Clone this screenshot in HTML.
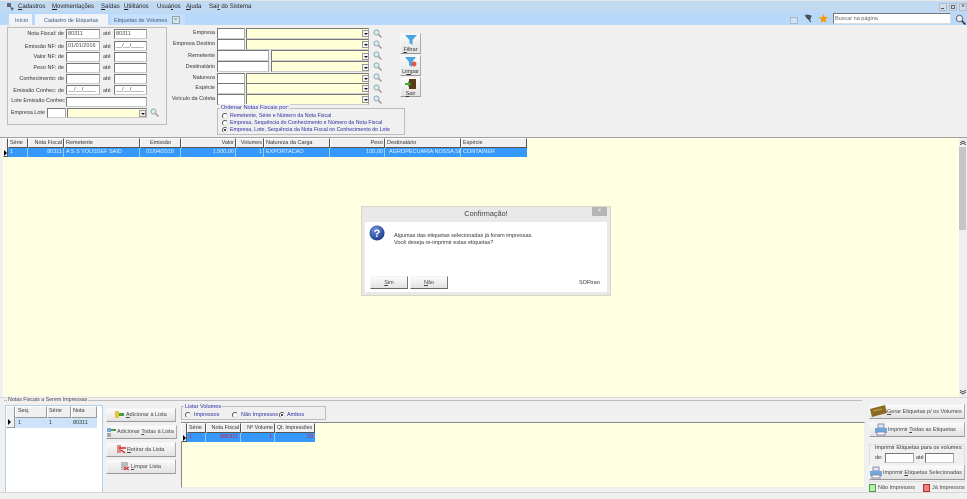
<!DOCTYPE html>
<html lang="pt-BR"><head><meta charset="utf-8"><title>Etiquetas de Volumes</title>
<style>
html,body{margin:0;padding:0;width:967px;height:499px;overflow:hidden;background:#f0f0f0}
body{font:5.5px/1 "Liberation Sans",sans-serif;color:#333;position:relative}
#r{position:absolute;left:0;top:0;width:967px;height:499px;filter:blur(.35px)}
#r div,#r svg{position:absolute}
.t{white-space:nowrap;line-height:8px;height:8px}
.m{font-size:6px;color:#222;top:3px}
.l{white-space:nowrap;line-height:8px;height:8px;text-align:right}
.i{background:#fff;border:1px solid;border-color:#777 #aaa #ccc #777;box-sizing:border-box;height:11px;line-height:8px;padding-left:1px;color:#444}
.y{background:#ffffd8;border:1px solid;border-color:#777 #aaa #ccc #777;box-sizing:border-box;height:11px}
.ar{background:#f4f4f4;width:7px;height:7px;border:1px solid #999;box-sizing:border-box}
.ar:after{content:"";position:absolute;left:1px;top:2px;border:2px solid transparent;border-top:2px solid #111;border-bottom:0}
.h{background:#f0f0f0;border:1px solid;border-color:#fff #555 #555 #fff;box-sizing:border-box;height:10px;line-height:8px;white-space:nowrap;padding:0 1px;overflow:hidden;color:#333}
.c{height:9px;line-height:9px;color:#e8f3ff;white-space:nowrap;padding:0 1px;box-sizing:border-box;border-right:1px solid #9ccbf8;overflow:hidden}
.b{background:linear-gradient(#fbfbfb,#e2e2e2);border:1px solid;border-color:#f4f4f4 #aaa #999 #f4f4f4;box-sizing:border-box;line-height:12px;text-align:center;white-space:nowrap;color:#444}
.tl{text-align:left}
.gb{border:1px solid #bdbdbd;box-sizing:border-box}
.rb{width:6px;height:6px;border-radius:50%;background:#fff;border:1px solid;border-color:#555 #ddd #ddd #555;box-sizing:border-box}
.on:after{content:"";position:absolute;left:1px;top:1px;width:2px;height:2px;background:#111;border-radius:50%}
.bl{color:#2c2ca0}
.red{color:#d8193f}
u{text-decoration:underline}
</style></head><body><div id="r">

<!-- top bars -->
<div style="left:0;top:0;width:967px;height:1px;background:#e6e6e6"></div>
<div style="left:0;top:1px;width:967px;height:11px;background:#c2d9f2"></div>
<div style="left:0;top:12px;width:967px;height:13px;background:#b9d9fb"></div>
<svg style="left:7px;top:3px" width="8" height="8" viewBox="0 0 8 8"><path d="M0 0h4v4H0zM3 4l4 1-2 3z" fill="#667"/></svg>
<div class="t m" style="left:18px"><u>C</u>adastros</div>
<div class="t m" style="left:52px"><u>M</u>ovimentações</div>
<div class="t m" style="left:101px"><u>S</u>aídas</div>
<div class="t m" style="left:124px"><u>U</u>tilitários</div>
<div class="t m" style="left:157px">Usuá<u>r</u>ios</div>
<div class="t m" style="left:186px"><u>A</u>juda</div>
<div class="t m" style="left:209px">Sai<u>r</u> do Sistema</div>

<div style="left:939px;top:3px;width:8px;height:8px;background:#d2dde8;border:1px solid #b0bccb;box-sizing:border-box"></div>
<div style="left:941px;top:8px;width:3px;height:1px;background:#555"></div>
<div style="left:949px;top:3px;width:8px;height:8px;background:#d2dde8;border:1px solid #b0bccb;box-sizing:border-box"></div>
<div style="left:951px;top:5px;width:4px;height:4px;border:1px solid #666;box-sizing:border-box"></div>
<div style="left:959px;top:3px;width:8px;height:8px;background:#d2dde8;border:1px solid #b0bccb;box-sizing:border-box"></div>
<div class="t" style="left:961px;top:3px;color:#444;font-size:7px">×</div>

<!-- tabs -->
<div style="left:9px;top:14px;width:23px;height:11px;background:#f0f4f8"></div>
<div class="t" style="left:15px;top:17px;color:#3c5a80">Início</div>
<div style="left:35px;top:14px;width:73px;height:11px;background:#f0f4f8"></div>
<div class="t" style="left:44px;top:17px;color:#3c5a80">Cadastro de Etiquetas</div>
<div style="left:111px;top:14px;width:74px;height:11px;background:#c6e0fb"></div>
<div class="t" style="left:114px;top:17px;color:#3c5a80">Etiquetas de Volumes</div>
<div style="left:172px;top:16px;width:8px;height:8px;background:#d8e4f0;border:1px solid #8aa;box-sizing:border-box"></div>
<div class="t" style="left:174px;top:16px;color:#666">×</div>

<div style="left:790px;top:17px;width:8px;height:7px;background:#d2e2f4;border:1px solid #a8b8ca;box-sizing:border-box"></div>
<svg style="left:804px;top:14px" width="9" height="9" viewBox="0 0 9 9"><path d="M1 1l6 7M3 1l4 1-1 3-3-1z" stroke="#444" fill="#555"/></svg>
<svg style="left:819px;top:14px" width="9" height="9" viewBox="0 0 10 10"><path d="M5 0l1.500 3.300 3.500.4-2.600 2.400.7 3.600L5 8l-3.100 1.700.7-3.600L0 3.700l3.500-.4z" fill="#f59a10"/></svg>
<div style="left:833px;top:13px;width:118px;height:11px;background:#fff;border:1px solid;border-color:#777 #ddd #ddd #777;box-sizing:border-box"></div>
<div class="t" style="left:835px;top:15px;color:#666">Buscar na página</div>
<svg style="left:955px;top:14px" width="11" height="11" viewBox="0 0 11 11"><circle cx="4.500" cy="4.500" r="3.200" fill="#e6eef6" stroke="#777" stroke-width="1.200"/><path d="M7 7l3.500 3.500" stroke="#333" stroke-width="1.600"/></svg>

<!-- left filter -->
<div class="gb" style="left:7px;top:27px;width:160px;height:98px;background:#f0f0f0"></div>
<div class="l" style="left:10px;width:54px;top:30px">Nota Fiscal: de</div>
<div class="l" style="left:10px;width:54px;top:43px">Emissão NF: de</div>
<div class="l" style="left:10px;width:54px;top:53px">Valor NF: de</div>
<div class="l" style="left:10px;width:54px;top:64px">Peso NF: de</div>
<div class="l" style="left:10px;width:54px;top:75px">Conhecimento: de</div>
<div class="l" style="left:10px;width:54px;top:87px">Emissão Conhec: de</div>
<div class="l" style="left:10px;width:55px;top:97px">Lote Emissão Conhec</div>
<div class="l" style="left:5px;width:40px;top:109px">Empresa Lote</div>

<div class="i" style="left:66px;top:29px;width:34px;height:10px">80311</div>
<div class="i" style="left:66px;top:41px;width:34px;height:10px">01/01/2016</div>
<div class="i" style="left:66px;top:52px;width:34px;height:10px"></div>
<div class="i" style="left:66px;top:63px;width:34px;height:10px"></div>
<div class="i" style="left:66px;top:74px;width:34px;height:10px"></div>
<div class="i" style="left:66px;top:85px;width:34px;height:10px">__/__/____</div>
<div class="i" style="left:66px;top:97px;width:81px;height:10px"></div>
<div class="i" style="left:47px;top:108px;width:19px;height:10px"></div>
<div class="y" style="left:67px;top:108px;width:80px;height:10px"></div>
<div class="ar" style="left:139px;top:110px"></div>

<div class="t" style="left:103px;top:30px">até</div>
<div class="t" style="left:103px;top:43px">até</div>
<div class="t" style="left:103px;top:53px">até</div>
<div class="t" style="left:103px;top:64px">até</div>
<div class="t" style="left:103px;top:75px">até</div>
<div class="t" style="left:103px;top:87px">até</div>
<div class="i" style="left:114px;top:29px;width:33px;height:10px">80311</div>
<div class="i" style="left:114px;top:41px;width:33px;height:10px">__/__/____</div>
<div class="i" style="left:114px;top:52px;width:33px;height:10px"></div>
<div class="i" style="left:114px;top:63px;width:33px;height:10px"></div>
<div class="i" style="left:114px;top:74px;width:33px;height:10px"></div>
<div class="i" style="left:114px;top:85px;width:33px;height:10px">__/__/____</div>
<svg style="left:150px;top:108px" width="9" height="9" viewBox="0 0 9 9"><circle cx="3.500" cy="3.500" r="2.500" fill="#dfeaf2" stroke="#8aa"/><path d="M5.500 5.500l3 3" stroke="#a88" stroke-width="1.300"/></svg>

<!-- right filter -->
<div class="l" style="left:170px;width:45px;top:29px">Empresa</div>
<div class="l" style="left:170px;width:45px;top:40px">Empresa Destino</div>
<div class="l" style="left:170px;width:45px;top:52px">Remetente</div>
<div class="l" style="left:170px;width:45px;top:63px">Destinatário</div>
<div class="l" style="left:170px;width:45px;top:74px">Natureza</div>
<div class="l" style="left:170px;width:45px;top:84px">Espécie</div>
<div class="l" style="left:170px;width:45px;top:95px">Veículo da Coleta</div>

<div class="i" style="left:217px;top:28px;width:28px"></div>
<div class="y" style="left:246px;top:28px;width:123px"></div>
<div class="ar" style="left:362px;top:30px"></div>
<div class="i" style="left:217px;top:39px;width:28px"></div>
<div class="y" style="left:246px;top:39px;width:123px"></div>
<div class="ar" style="left:362px;top:41px"></div>
<div class="i" style="left:217px;top:50px;width:52px"></div>
<div class="y" style="left:271px;top:50px;width:98px"></div>
<div class="ar" style="left:362px;top:53px"></div>
<div class="i" style="left:217px;top:61px;width:52px"></div>
<div class="y" style="left:271px;top:61px;width:98px"></div>
<div class="ar" style="left:362px;top:64px"></div>
<div class="i" style="left:217px;top:73px;width:28px"></div>
<div class="y" style="left:246px;top:73px;width:123px"></div>
<div class="ar" style="left:362px;top:75px"></div>
<div class="i" style="left:217px;top:83px;width:28px"></div>
<div class="y" style="left:246px;top:83px;width:123px"></div>
<div class="ar" style="left:362px;top:85px"></div>
<div class="i" style="left:217px;top:94px;width:28px"></div>
<div class="y" style="left:246px;top:94px;width:123px"></div>
<div class="ar" style="left:362px;top:96px"></div>

<svg style="left:373px;top:29px" width="9" height="9" viewBox="0 0 9 9"><circle cx="3.500" cy="3.500" r="2.500" fill="#dfeaf2" stroke="#8aa"/><path d="M5.500 5.500l3 3" stroke="#a88" stroke-width="1.300"/></svg>
<svg style="left:373px;top:40px" width="9" height="9" viewBox="0 0 9 9"><circle cx="3.500" cy="3.500" r="2.500" fill="#dfeaf2" stroke="#8aa"/><path d="M5.500 5.500l3 3" stroke="#a88" stroke-width="1.300"/></svg>
<svg style="left:373px;top:51px" width="9" height="9" viewBox="0 0 9 9"><circle cx="3.500" cy="3.500" r="2.500" fill="#dfeaf2" stroke="#8aa"/><path d="M5.500 5.500l3 3" stroke="#a88" stroke-width="1.300"/></svg>
<svg style="left:373px;top:62px" width="9" height="9" viewBox="0 0 9 9"><circle cx="3.500" cy="3.500" r="2.500" fill="#dfeaf2" stroke="#8aa"/><path d="M5.500 5.500l3 3" stroke="#a88" stroke-width="1.300"/></svg>
<svg style="left:373px;top:73px" width="9" height="9" viewBox="0 0 9 9"><circle cx="3.500" cy="3.500" r="2.500" fill="#dfeaf2" stroke="#8aa"/><path d="M5.500 5.500l3 3" stroke="#a88" stroke-width="1.300"/></svg>
<svg style="left:373px;top:84px" width="9" height="9" viewBox="0 0 9 9"><circle cx="3.500" cy="3.500" r="2.500" fill="#dfeaf2" stroke="#8aa"/><path d="M5.500 5.500l3 3" stroke="#a88" stroke-width="1.300"/></svg>
<svg style="left:373px;top:95px" width="9" height="9" viewBox="0 0 9 9"><circle cx="3.500" cy="3.500" r="2.500" fill="#dfeaf2" stroke="#8aa"/><path d="M5.500 5.500l3 3" stroke="#a88" stroke-width="1.300"/></svg>

<!-- side buttons -->
<div class="b" style="left:400px;top:33px;width:21px;height:21px;line-height:6px;padding-top:13px;color:#333"><u>F</u>iltrar</div>
<svg style="left:405px;top:34px" width="12" height="12" viewBox="0 0 12 12"><path d="M0 1h12L7.500 6v5l-3-2V6z" fill="#4aa6e2"/></svg>
<div class="b" style="left:400px;top:55px;width:21px;height:21px;line-height:6px;padding-top:13px;color:#333">Li<u>m</u>par</div>
<svg style="left:405px;top:56px" width="12" height="12" viewBox="0 0 12 12"><path d="M0 1h11L7 6v5l-3-2V6z" fill="#4aa6e2"/><circle cx="9" cy="8" r="2.500" fill="#e2574c"/></svg>
<div class="b" style="left:400px;top:77px;width:21px;height:20px;line-height:6px;padding-top:13px;color:#333"><u>S</u>air</div>
<svg style="left:405px;top:78px" width="12" height="12" viewBox="0 0 12 12"><rect x="4" y="1" width="7" height="10" fill="#5a3a1c"/><path d="M0 5h3V3l3 3-3 3V7H0z" fill="#49a83a"/></svg>

<!-- order group -->
<div class="gb" style="left:217px;top:108px;width:188px;height:27px"></div>
<div class="t bl" style="left:220px;top:104px;background:#f0f0f0;padding:0 1px;font-size:5.700px">Ordenar Notas Fiscais por:</div>
<div class="rb" style="left:222px;top:113px"></div>
<div class="t bl" style="left:230px;top:112px;font-size:5.300px">Remetente, Série e Número da Nota Fiscal</div>
<div class="rb" style="left:222px;top:120px"></div>
<div class="t bl" style="left:230px;top:119px;font-size:5.300px">Empresa, Sequência do Conhecimento e Número da Nota Fiscal</div>
<div class="rb on" style="left:222px;top:127px"></div>
<div class="t bl" style="left:230px;top:126px;font-size:5.300px">Empresa, Lote, Sequência da Nota Fiscal no Conhecimento do Lote</div>

<!-- main grid -->
<div style="left:0;top:137px;width:967px;height:1px;background:#a0a0a0"></div>
<div style="left:3px;top:138px;width:956px;height:259px;background:#ffffe2"></div>
<div style="left:959px;top:138px;width:8px;height:259px;background:#efefef"></div>
<div style="left:959px;top:147px;width:7px;height:83px;background:#c6c6c6"></div>
<svg style="left:960px;top:140px" width="6" height="5" viewBox="0 0 6 5"><path d="M0 3l3-2 3 2M0 5l3-2 3 2" fill="none" stroke="#444" stroke-width=".8"/></svg>
<svg style="left:960px;top:390px" width="6" height="5" viewBox="0 0 6 5"><path d="M0 0l3 2 3-2M0 2l3 2 3-2" fill="none" stroke="#444" stroke-width=".8"/></svg>

<div class="h" style="left:3px;top:138px;width:5px;height:19px"></div>
<div class="h" style="left:8px;top:138px;width:20px">Série</div>
<div class="h" style="left:28px;top:138px;width:36px;text-align:right">Nota Fiscal</div>
<div class="h" style="left:64px;top:138px;width:76px">Remetente</div>
<div class="h" style="left:140px;top:138px;width:41px;text-align:center">Emissão</div>
<div class="h" style="left:181px;top:138px;width:55px;text-align:right">Valor</div>
<div class="h" style="left:236px;top:138px;width:28px;text-align:right">Volumes</div>
<div class="h" style="left:264px;top:138px;width:66px">Natureza da Carga</div>
<div class="h" style="left:330px;top:138px;width:55px;text-align:right">Peso</div>
<div class="h" style="left:385px;top:138px;width:76px">Destinatário</div>
<div class="h" style="left:461px;top:138px;width:66px">Espécie</div>
<div style="left:8px;top:148px;width:519px;height:9px;background:#3598fb"></div>
<div style="left:4px;top:150px;border-left:3px solid #000;border-top:3px solid transparent;border-bottom:3px solid transparent;width:0;height:0"></div>
<div class="c" style="left:8px;top:148px;width:20px;padding-left:2px">1</div>
<div class="c" style="left:28px;top:148px;width:36px;text-align:right">80311</div>
<div class="c" style="left:64px;top:148px;width:76px;padding-left:2px">A S S YOUSSEF SAID</div>
<div class="c" style="left:140px;top:148px;width:41px;text-align:center">01/04/2018</div>
<div class="c" style="left:181px;top:148px;width:55px;text-align:right">1.500,00</div>
<div class="c" style="left:236px;top:148px;width:28px;text-align:right">1</div>
<div class="c" style="left:264px;top:148px;width:66px;padding-left:2px">EXPORTACAO</div>
<div class="c" style="left:330px;top:148px;width:55px;text-align:right">100,00</div>
<div class="c" style="left:385px;top:148px;width:76px;padding-left:4px">AGROPECUARIA NOSSA SEN</div>
<div class="c" style="left:461px;top:148px;width:66px;border:0;padding-left:2px">CONTAINER</div>

<!-- dialog -->
<div style="left:361px;top:206px;width:250px;height:90px;background:#e9e9e9;border:1px solid #d8d8c8;box-sizing:border-box"></div>
<div style="left:365px;top:222px;width:242px;height:70px;background:#fff"></div>
<div class="t" style="left:361px;top:209px;width:250px;text-align:center;font-size:7.300px;line-height:9px;height:9px;color:#444">Confirmação!</div>
<div style="left:592px;top:207px;width:15px;height:9px;background:#b5b5b5"></div>
<div class="t" style="left:592px;top:207px;width:15px;text-align:center;color:#fff;font-size:6px">×</div>
<svg style="left:369px;top:225px" width="16" height="16" viewBox="0 0 16 16"><defs><radialGradient id="q" cx=".4" cy=".3" r=".8"><stop offset="0" stop-color="#6f94dd"/><stop offset="1" stop-color="#12307f"/></radialGradient></defs><circle cx="8" cy="8" r="7.500" fill="url(#q)"/><text x="8" y="12" text-anchor="middle" font-family="Liberation Sans" font-weight="700" font-size="11" fill="#fff">?</text></svg>
<div class="t" style="left:394px;top:232px;color:#333">Algumas das etiquetas selecionadas já foram impressas.</div>
<div class="t" style="left:394px;top:239px;color:#333">Você deseja re-imprimir estas etiquetas?</div>
<div class="b" style="left:370px;top:276px;width:38px;height:13px;border-color:#f4f4f4 #777 #666 #f4f4f4"><u>S</u>im</div>
<div class="b" style="left:410px;top:276px;width:38px;height:13px;border-color:#f4f4f4 #777 #666 #f4f4f4"><u>N</u>ão</div>
<div class="t" style="left:579px;top:279px;color:#333">SOFtran</div>

<!-- bottom -->
<div style="left:0;top:397px;width:967px;height:1px;background:#d8d8d8"></div>
<div style="left:4px;top:400px;width:858px;height:1px;background:#bdbdbd"></div>
<div class="t" style="left:7px;top:396px;background:#f0f0f0;padding:0 1px;color:#444;font-size:5.300px">Notas Fiscais a Serem Impressas</div>

<div style="left:5px;top:405px;width:98px;height:88px;background:#fff;border:1px solid #b4cfe8;box-sizing:border-box"></div>
<div class="h" style="left:6px;top:406px;width:9px;height:22px;border-color:#fff #999 #999 #fff"></div>
<div class="h" style="left:15px;top:406px;width:32px;height:12px;line-height:9px;padding-left:2px;border-color:#fff #999 #999 #fff">Seq.</div>
<div class="h" style="left:47px;top:406px;width:24px;height:12px;line-height:9px;padding-left:1px;border-color:#fff #999 #999 #fff">Série</div>
<div class="h" style="left:71px;top:406px;width:26px;height:12px;line-height:9px;padding-left:1px;border-color:#fff #999 #999 #fff">Nota</div>
<div style="left:15px;top:418px;width:82px;height:10px;background:#cce3fa"></div>
<div style="left:8px;top:419px;border-left:3px solid #000;border-top:3px solid transparent;border-bottom:3px solid transparent;width:0;height:0"></div>
<div class="t" style="left:18px;top:419px">1</div>
<div class="t" style="left:49px;top:419px">1</div>
<div class="t" style="left:73px;top:419px">80311</div>

<div class="b tl" style="left:106px;top:408px;width:70px;height:14px;padding-left:19px;line-height:13px"><u>A</u>dicionar à Lista</div>
<svg style="left:115px;top:410px" width="9" height="9" viewBox="0 0 9 9"><rect x="0" y="1" width="4" height="7" fill="#e7c33a"/><rect x="4" y="3" width="5" height="3" fill="#4a9c3a"/></svg>
<div class="b tl" style="left:106px;top:425px;width:71px;height:14px;padding-left:10px;line-height:13px">Adicionar <u>T</u>odas à Lista</div>
<svg style="left:107px;top:427px" width="9" height="10" viewBox="0 0 9 10"><rect x="0" y="1" width="4" height="4" fill="#7aa7d9"/><rect x="0" y="6" width="4" height="4" fill="#aaa"/><rect x="4" y="2" width="5" height="2" fill="#4a9c3a"/></svg>
<div class="b tl" style="left:106px;top:442px;width:70px;height:15px;padding-left:20px;line-height:14px"><u>R</u>etirar da Lista</div>
<svg style="left:117px;top:445px" width="9" height="9" viewBox="0 0 9 9"><rect x="0" y="0" width="4" height="8" fill="#d98a8a"/><path d="M2 3h7M4 5l4 3" stroke="#d22" stroke-width="1.400"/></svg>
<div class="b tl" style="left:106px;top:459px;width:70px;height:15px;padding-left:24px;line-height:14px"><u>L</u>impar Lista</div>
<svg style="left:121px;top:462px" width="9" height="9" viewBox="0 0 9 9"><rect x="0" y="0" width="7" height="8" fill="#bbb"/><path d="M3 5l5 3M3 8l5-3" stroke="#d22"/></svg>

<!-- listar volumes -->
<div class="gb" style="left:181px;top:406px;width:145px;height:14px"></div>
<div class="t bl" style="left:184px;top:403px;background:#f0f0f0;padding:0 1px">Listar Volumes</div>
<div class="rb" style="left:185px;top:412px"></div>
<div class="t bl" style="left:194px;top:411px">Impressos</div>
<div class="rb" style="left:232px;top:412px"></div>
<div class="t bl" style="left:241px;top:411px">Não Impressos</div>
<div class="rb on" style="left:279px;top:412px"></div>
<div class="t bl" style="left:287px;top:411px">Ambos</div>

<div style="left:181px;top:422px;width:684px;height:66px;background:#ffffe2;border:1px solid;border-color:#888 #eee #eee #888;box-sizing:border-box"></div>
<div class="h" style="left:181px;top:423px;width:6px;height:19px"></div>
<div class="h" style="left:187px;top:423px;width:19px">Série</div>
<div class="h" style="left:206px;top:423px;width:35px;text-align:right">Nota Fiscal</div>
<div class="h" style="left:241px;top:423px;width:34px;text-align:right">Nº Volume</div>
<div class="h" style="left:275px;top:423px;width:40px;font-size:5.200px">Qt. Impressões</div>
<div style="left:187px;top:433px;width:128px;height:9px;background:#3598fb"></div>
<div style="left:183px;top:435px;border-left:3px solid #000;border-top:3px solid transparent;border-bottom:3px solid transparent;width:0;height:0"></div>
<div class="c red" style="left:187px;top:433px;width:19px;padding-left:2px">1</div>
<div class="c red" style="left:206px;top:433px;width:35px;text-align:right;padding-right:2px">080311</div>
<div class="c red" style="left:241px;top:433px;width:34px;text-align:right;padding-right:2px">1</div>
<div class="c red" style="left:275px;top:433px;width:40px;text-align:right;border:0;padding-right:2px">20</div>

<!-- right buttons -->
<div class="b tl" style="left:869px;top:404px;width:96px;height:15px;padding-left:17px;line-height:14px"><u>G</u>erar Etiquetas p/ os Volumes</div>
<svg style="left:870px;top:405px" width="17" height="13" viewBox="0 0 17 13"><path d="M0 4l15-4 2 8-15 4z" fill="#8a6a20"/><path d="M3 6l9-2" stroke="#c9a850"/></svg>
<div class="b tl" style="left:869px;top:422px;width:96px;height:15px;padding-left:18px;line-height:14px">Imprimir <u>T</u>odas as Etiquetas</div>
<svg style="left:875px;top:423px" width="12" height="13" viewBox="0 0 12 13"><rect x="3" y="1" width="6" height="4" fill="#dfe9f5" stroke="#88a"/><rect x="0" y="5" width="12" height="5" fill="#6fa8dc"/><rect x="2" y="9" width="8" height="3" fill="#fff" stroke="#88a"/></svg>
<div class="gb" style="left:869px;top:444px;width:96px;height:38px;border-color:#ddd"></div>
<div class="t" style="left:875px;top:444px;color:#333">Imprimir Etiquetas para os volumes:</div>
<div class="t" style="left:875px;top:454px;color:#333">de:</div>
<div class="i" style="left:885px;top:453px;width:29px;height:10px"></div>
<div class="t" style="left:916px;top:454px;color:#333">até</div>
<div class="i" style="left:925px;top:453px;width:29px;height:10px"></div>
<div class="b tl" style="left:869px;top:465px;width:96px;height:15px;padding-left:13px;line-height:14px">Imprimir <u>E</u>tiquetas Selecionadas</div>
<svg style="left:870px;top:466px" width="12" height="13" viewBox="0 0 12 13"><rect x="3" y="1" width="6" height="4" fill="#dfe9f5" stroke="#88a"/><rect x="0" y="5" width="12" height="5" fill="#6fa8dc"/><rect x="2" y="9" width="8" height="3" fill="#fff" stroke="#88a"/></svg>
<div style="left:869px;top:484px;width:7px;height:8px;background:#b7eeb0;border:1px solid #4b9e4b;box-sizing:border-box"></div>
<div class="t" style="left:878px;top:484px;color:#444">Não Impressos</div>
<div style="left:923px;top:484px;width:7px;height:8px;background:#f08080;border:1px solid #a33;box-sizing:border-box"></div>
<div class="t" style="left:932px;top:484px;color:#444">Já Impressos</div>

<div style="left:0;top:492px;width:967px;height:1px;background:#d5d5d5"></div>
</div></body></html>
